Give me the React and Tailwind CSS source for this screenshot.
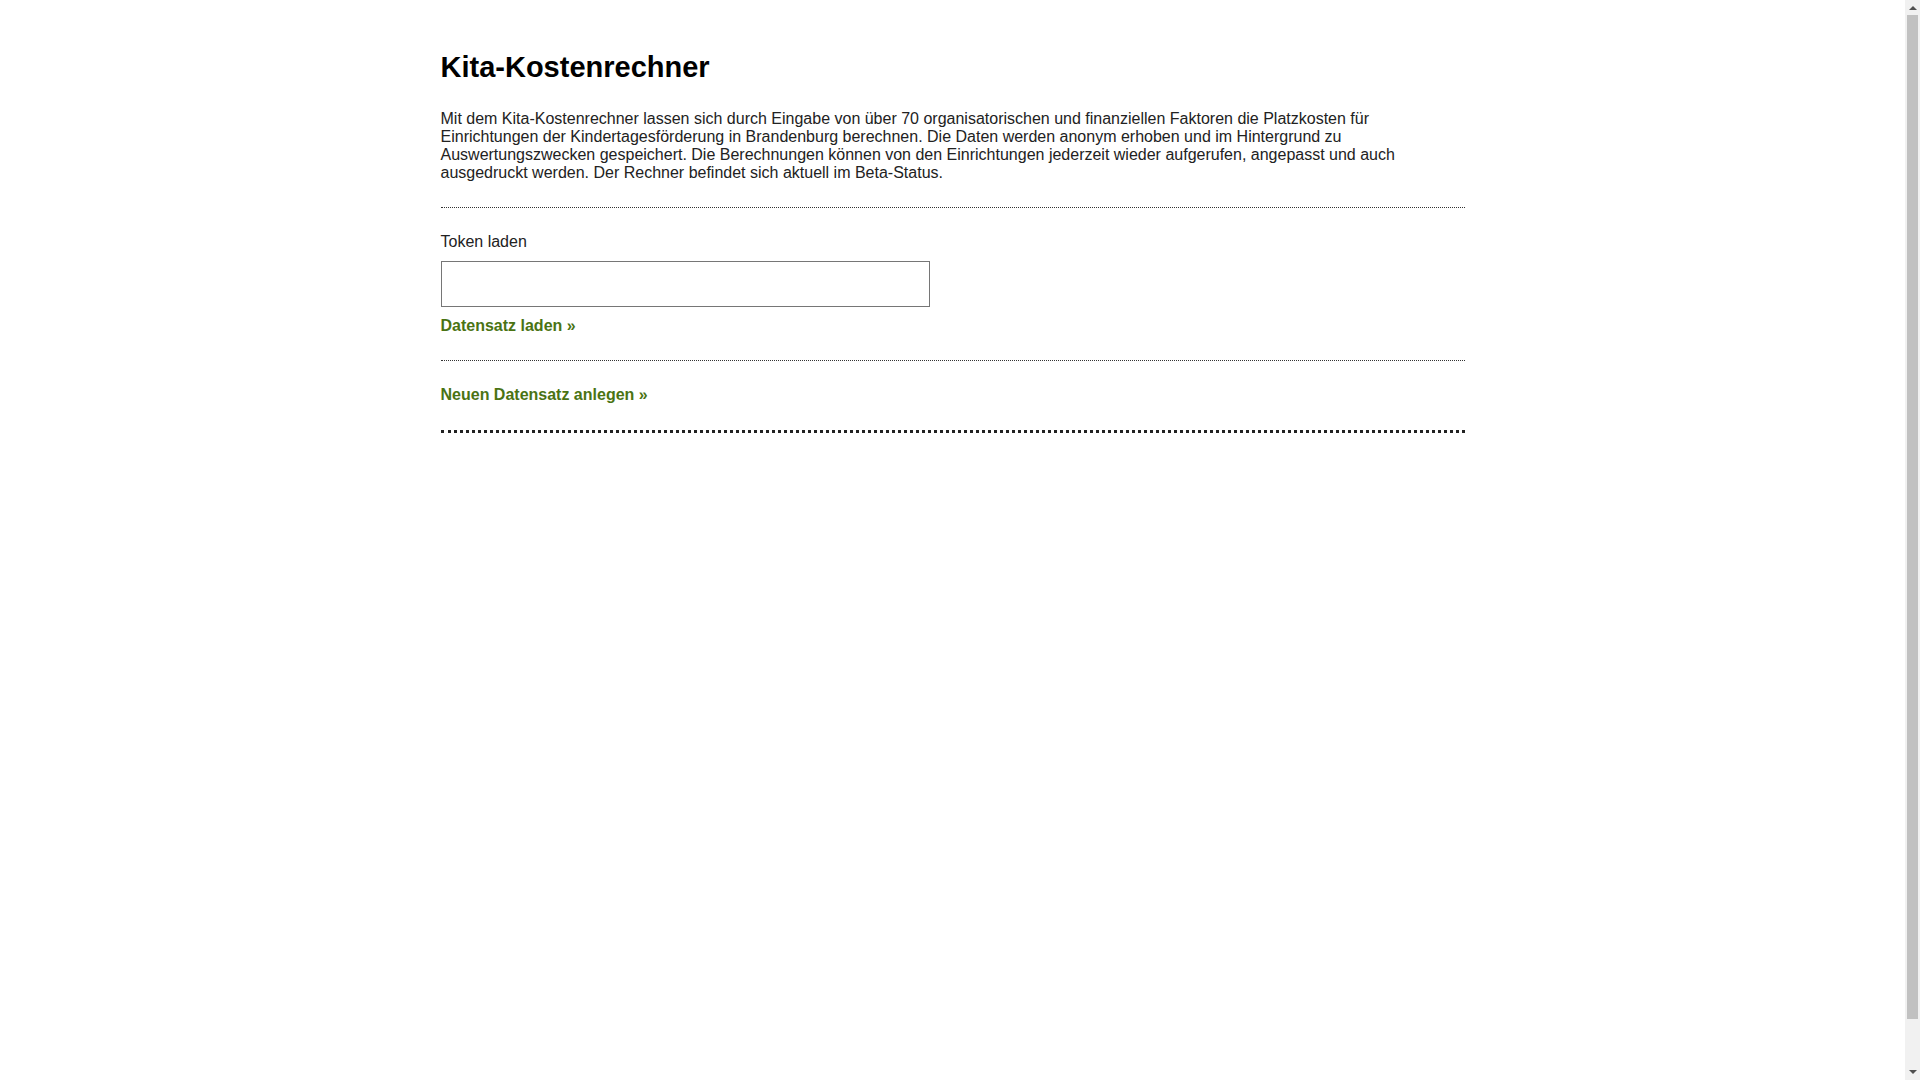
export default function App() {
    return (
        <div className="h-[1080px] flex bg-white font-['Liberation_Sans',Arial,sans-serif] text-[#222]">
            <div className="flex-1">
                <div className="w-[1024px] mx-auto pt-[51px]">

                    {/* Header */}
                    <h1 className="text-[29px] leading-[33px] font-bold text-black">Kita-Kostenrechner</h1>
                    <p className="mt-[26px] text-[16px] leading-[18px] pr-[60px]">
                        Mit dem Kita-Kostenrechner lassen sich durch Eingabe von über 70 organisatorischen und finanziellen Faktoren die Platzkosten für
                        Einrichtungen der Kindertagesförderung in Brandenburg berechnen. Die Daten werden anonym erhoben und im Hintergrund zu
                        Auswertungszwecken gespeichert. Die Berechnungen können von den Einrichtungen jederzeit wieder aufgerufen, angepasst und auch
                        ausgedruckt werden. Der Rechner befindet sich aktuell im Beta-Status.
                    </p>

                    {/* Token laden */}
                    <div className="mt-[25px] border-t border-dotted border-[#333] pt-[25px] pb-[25px]">
                        <label htmlFor="token" className="block text-[16px] leading-[18px]">Token laden</label>
                        <input
                            id="token"
                            type="text"
                            className="block mt-[10px] w-[489px] h-[46px] border border-[#767676] bg-white px-2 text-[16px] outline-none"
                        />
                        <a href="#" className="block mt-[10px] text-[16px] leading-[18px] font-bold text-[#4a7313]">
                            Datensatz laden »
                        </a>
                    </div>

                    {/* Neuer Datensatz */}
                    <div className="border-t border-dotted border-[#333] pt-[25px] pb-[26px] border-b-[3px] border-b-[#222]">
                        <a href="#" className="block text-[16px] leading-[18px] font-bold text-[#4a7313]">
                            Neuen Datensatz anlegen »
                        </a>
                    </div>

                </div>
            </div>

            {/* Scrollbar */}
            <div className="w-[15px] bg-[#f1f1f1] flex flex-col items-center">
                <div className="h-[15px] flex items-center justify-center">
                    <div className="w-0 h-0 border-x-[4px] border-x-transparent border-b-[4px] border-b-[#505050]" />
                </div>
                <div className="w-[11px] h-[1004px] bg-[#c1c1c1]" />
                <div className="flex-1 flex items-end justify-center pb-[6px]">
                    <div className="w-0 h-0 border-x-[4px] border-x-transparent border-t-[4px] border-t-[#505050]" />
                </div>
            </div>
        </div>
    );
}
